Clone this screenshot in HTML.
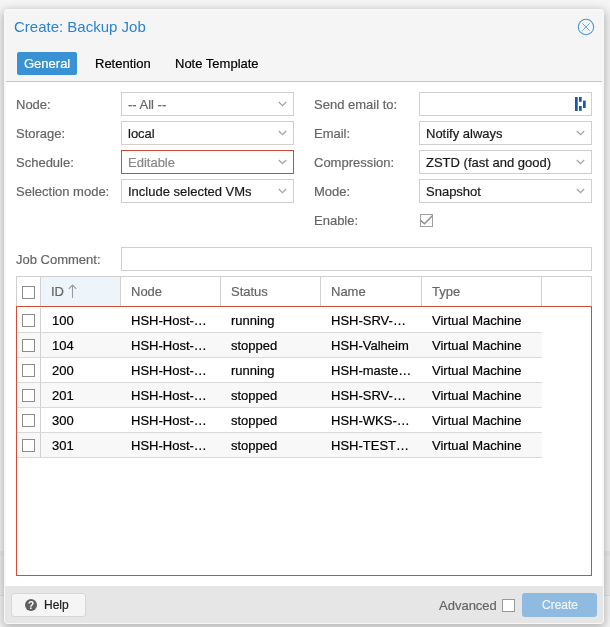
<!DOCTYPE html>
<html><head><meta charset="utf-8">
<style>
*{box-sizing:border-box;margin:0;padding:0}
html,body{width:610px;height:627px;overflow:hidden}
body{background:#f5f5f5;-webkit-text-stroke:0.2px;font-family:"Liberation Sans",sans-serif;font-size:13px;position:relative}
.a{position:absolute}
.t{position:absolute;white-space:nowrap;line-height:16px}
#dlg{left:4px;top:9px;width:600px;height:615px;background:#f7f7f7;border-radius:4px;box-shadow:0 3px 10px 2px rgba(0,0,0,0.25)}
#hdr{left:6px;top:11px;width:596px;height:70px;background:#f5f5f5}
#body{left:6px;top:82px;width:596px;height:504px;background:#fff}
#tabline{left:6px;top:81px;width:596px;height:1px;background:#c8c8c8}
#foot{left:5px;top:586px;width:598px;height:37px;background:#e6e6e6;border-radius:0 0 3px 3px}
.lbl{color:#666}
.fld{position:absolute;height:24px;border:1px solid #cfcfcf;background:#fff;width:173px}
.fld .v{position:absolute;left:6px;top:4px;line-height:16px;color:#1a1a1a;white-space:nowrap}
.chev{position:absolute;right:6.5px;top:8px;width:9px;height:6px}
.cb{position:absolute;width:13px;height:13px;border:1px solid #8c8c8c;background:#fff}
.hc{position:absolute;top:277px;height:29px;color:#666}
.vl{position:absolute;width:1px;background:#d0d0d0}
.row{position:absolute;left:17px;width:525px;height:25px;border-bottom:1px solid #d9d9d9}
.alt{background:#f8f8f8}
.cell{position:absolute;top:5px;line-height:16px;white-space:nowrap;color:#000}
</style></head>
<body>
<div id="root" style="position:absolute;left:0;top:0;width:610px;height:627px;will-change:transform">
<div class="a" style="left:0;top:551px;width:610px;height:5px;background:rgba(0,0,0,0.045)"></div>
<div class="a" style="left:0;top:556px;width:610px;height:40px;background:rgba(0,0,0,0.02)"></div>
<div class="a" style="left:0;top:595px;width:610px;height:1px;background:rgba(0,0,0,0.05)"></div>
<div class="a" style="left:0;top:596px;width:610px;height:31px;background:rgba(255,255,255,0.28)"></div>
<div id="dlg" class="a"></div>
<div id="hdr" class="a"></div>
<div class="t" style="left:14px;top:18px;font-size:15px;line-height:18px;color:#2a83d0;-webkit-text-stroke:0">Create: Backup Job</div>
<svg class="a" style="left:577px;top:18px" width="18" height="18" viewBox="0 0 18 18"><circle cx="9" cy="9" r="7.7" fill="none" stroke="#4a95da" stroke-width="1.05"/><path d="M5.3 5.3L12.7 12.7M12.7 5.3L5.3 12.7" stroke="#5a9fdc" stroke-width="0.9"/></svg>

<div class="a" style="left:17px;top:52px;width:60px;height:23px;background:#3892d4;border-radius:2px"></div>
<div class="t" style="left:24px;top:56px;color:#fff">General</div>
<div class="t" style="left:95px;top:56px;color:#000">Retention</div>
<div class="t" style="left:175px;top:56px;color:#000">Note Template</div>

<div id="tabline" class="a"></div>
<div id="body" class="a"></div>
<div id="foot" class="a"></div>

<!-- left form -->
<div class="t lbl" style="left:16px;top:97px">Node:</div>
<div class="t lbl" style="left:16px;top:126px">Storage:</div>
<div class="t lbl" style="left:16px;top:155px">Schedule:</div>
<div class="t lbl" style="left:16px;top:184px">Selection mode:</div>

<div class="fld" style="left:121px;top:92px"><span class="v" style="color:#666">-- All --</span><svg class="chev" viewBox="0 0 9 6"><path d="M0.8 1L4.5 4.7L8.2 1" fill="none" stroke="#a3a3a3" stroke-width="1.25"/></svg></div>
<div class="fld" style="left:121px;top:121px"><span class="v">local</span><svg class="chev" viewBox="0 0 9 6"><path d="M0.8 1L4.5 4.7L8.2 1" fill="none" stroke="#a3a3a3" stroke-width="1.25"/></svg></div>
<div class="fld" style="left:121px;top:150px;border-color:#cf4c35"><span class="v" style="color:#888">Editable</span><svg class="chev" viewBox="0 0 9 6"><path d="M0.8 1L4.5 4.7L8.2 1" fill="none" stroke="#a3a3a3" stroke-width="1.25"/></svg></div>
<div class="fld" style="left:121px;top:179px"><span class="v">Include selected VMs</span><svg class="chev" viewBox="0 0 9 6"><path d="M0.8 1L4.5 4.7L8.2 1" fill="none" stroke="#a3a3a3" stroke-width="1.25"/></svg></div>

<!-- right form -->
<div class="t lbl" style="left:314px;top:97px">Send email to:</div>
<div class="t lbl" style="left:314px;top:126px">Email:</div>
<div class="t lbl" style="left:314px;top:155px">Compression:</div>
<div class="t lbl" style="left:314px;top:184px">Mode:</div>
<div class="t lbl" style="left:314px;top:213px">Enable:</div>

<div class="fld" style="left:419px;top:92px"><svg class="a" style="left:155px;top:4px" width="12" height="15" viewBox="0 0 12 15"><rect x="0" y="0" width="2.7" height="14" fill="#185a9a"/><rect x="4" y="0" width="2.7" height="4.8" fill="#185a9a"/><rect x="4" y="9" width="2.7" height="4.8" fill="#185a9a"/><rect x="8" y="3.6" width="2.7" height="7.4" fill="#185a9a"/></svg></div>
<div class="fld" style="left:419px;top:121px"><span class="v">Notify always</span><svg class="chev" viewBox="0 0 9 6"><path d="M0.8 1L4.5 4.7L8.2 1" fill="none" stroke="#a3a3a3" stroke-width="1.25"/></svg></div>
<div class="fld" style="left:419px;top:150px"><span class="v">ZSTD (fast and good)</span><svg class="chev" viewBox="0 0 9 6"><path d="M0.8 1L4.5 4.7L8.2 1" fill="none" stroke="#a3a3a3" stroke-width="1.25"/></svg></div>
<div class="fld" style="left:419px;top:179px"><span class="v">Snapshot</span><svg class="chev" viewBox="0 0 9 6"><path d="M0.8 1L4.5 4.7L8.2 1" fill="none" stroke="#a3a3a3" stroke-width="1.25"/></svg></div>
<div class="cb" style="left:420px;top:214px;border-color:#a0a0a0"></div>
<svg class="a" style="left:420px;top:214px" width="13" height="13" viewBox="0 0 13 13"><path d="M0.8 6.6L4.5 9.7L12.3 1.7" fill="none" stroke="#909090" stroke-width="1.5"/></svg>

<!-- job comment -->
<div class="t lbl" style="left:16px;top:252px">Job Comment:</div>
<div class="fld" style="left:121px;top:247px;width:471px"></div>

<!-- grid -->
<div class="a" style="left:16px;top:276px;width:576px;height:300px;border:1px solid #cfcfcf;background:#fff"></div>
<div class="a" style="left:41px;top:277px;width:79px;height:29px;background:#edf4fa"></div>
<div class="vl" style="left:40px;top:277px;height:29px"></div>
<div class="vl" style="left:120px;top:277px;height:29px"></div>
<div class="vl" style="left:220px;top:277px;height:29px"></div>
<div class="vl" style="left:320px;top:277px;height:29px"></div>
<div class="vl" style="left:421px;top:277px;height:29px"></div>
<div class="vl" style="left:541px;top:277px;height:29px"></div>
<div class="cb" style="left:22px;top:286px"></div>
<div class="t" style="left:51px;top:284px;color:#666">ID</div>
<svg class="a" style="left:68px;top:284px" width="9" height="15" viewBox="0 0 9 15"><path d="M4.5 1V14M0.8 4.8L4.5 1L8.2 4.8" fill="none" stroke="#999" stroke-width="1.1"/></svg>
<div class="t" style="left:131px;top:284px;color:#666">Node</div>
<div class="t" style="left:231px;top:284px;color:#666">Status</div>
<div class="t" style="left:331px;top:284px;color:#666">Name</div>
<div class="t" style="left:432px;top:284px;color:#666">Type</div>

<div id="rows">
<div class="row" style="top:308px"><div class="vl" style="left:23px;top:0;height:24px"></div><div class="cb" style="left:5px;top:6px"></div><div class="cell" style="left:35px">100</div><div class="cell" style="left:114px">HSH-Host-…</div><div class="cell" style="left:214px">running</div><div class="cell" style="left:314px">HSH-SRV-…</div><div class="cell" style="left:415px">Virtual Machine</div></div>
<div class="row alt" style="top:333px"><div class="vl" style="left:23px;top:0;height:24px"></div><div class="cb" style="left:5px;top:6px"></div><div class="cell" style="left:35px">104</div><div class="cell" style="left:114px">HSH-Host-…</div><div class="cell" style="left:214px">stopped</div><div class="cell" style="left:314px">HSH-Valheim</div><div class="cell" style="left:415px">Virtual Machine</div></div>
<div class="row" style="top:358px"><div class="vl" style="left:23px;top:0;height:24px"></div><div class="cb" style="left:5px;top:6px"></div><div class="cell" style="left:35px">200</div><div class="cell" style="left:114px">HSH-Host-…</div><div class="cell" style="left:214px">running</div><div class="cell" style="left:314px">HSH-maste…</div><div class="cell" style="left:415px">Virtual Machine</div></div>
<div class="row alt" style="top:383px"><div class="vl" style="left:23px;top:0;height:24px"></div><div class="cb" style="left:5px;top:6px"></div><div class="cell" style="left:35px">201</div><div class="cell" style="left:114px">HSH-Host-…</div><div class="cell" style="left:214px">stopped</div><div class="cell" style="left:314px">HSH-SRV-…</div><div class="cell" style="left:415px">Virtual Machine</div></div>
<div class="row" style="top:408px"><div class="vl" style="left:23px;top:0;height:24px"></div><div class="cb" style="left:5px;top:6px"></div><div class="cell" style="left:35px">300</div><div class="cell" style="left:114px">HSH-Host-…</div><div class="cell" style="left:214px">stopped</div><div class="cell" style="left:314px">HSH-WKS-…</div><div class="cell" style="left:415px">Virtual Machine</div></div>
<div class="row alt" style="top:433px"><div class="vl" style="left:23px;top:0;height:24px"></div><div class="cb" style="left:5px;top:6px"></div><div class="cell" style="left:35px">301</div><div class="cell" style="left:114px">HSH-Host-…</div><div class="cell" style="left:214px">stopped</div><div class="cell" style="left:314px">HSH-TEST…</div><div class="cell" style="left:415px">Virtual Machine</div></div>
</div>

<div class="a" style="left:16px;top:306px;width:576px;height:270px;border:1px solid #cf4c35"></div>

<!-- footer -->
<div class="a" style="left:11px;top:593px;width:75px;height:24px;background:#f5f5f5;border:1px solid #d6d6d6;border-radius:3px"></div>
<svg class="a" style="left:25px;top:599px" width="12" height="12" viewBox="0 0 12 12"><circle cx="6" cy="6" r="6" fill="#606060"/><text x="6" y="10" font-family="Liberation Sans" font-weight="bold" font-size="10" fill="#fff" text-anchor="middle">?</text></svg>
<div class="t" style="left:44px;top:597px;font-size:12px;color:#222">Help</div>
<div class="t" style="left:439px;top:598px;color:#666">Advanced</div>
<div class="cb" style="left:502px;top:599px;border-color:#999"></div>
<div class="a" style="left:522px;top:593px;width:75px;height:24px;background:#8fbbe0;border-radius:3px"></div>
<div class="t" style="left:542px;top:597px;font-size:12px;color:#f0f6fb">Create</div>
</div>
</body></html>
